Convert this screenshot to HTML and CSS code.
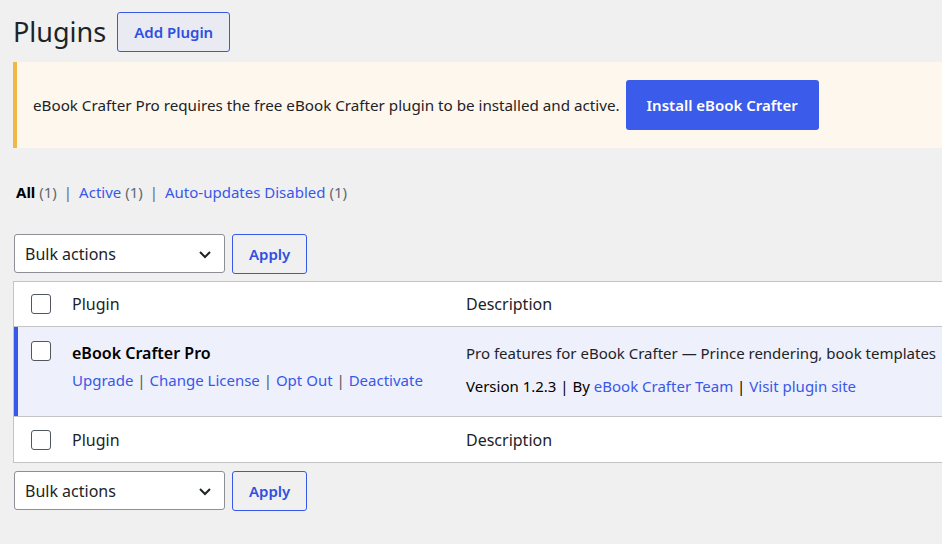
FILE: index.html
```html
<!doctype html>
<html lang="en">
<head>
  <meta charset="UTF-8">
  <title>Plugins</title>
  <link rel="stylesheet" href="styles.css">
</head>
<body>
  <div class="wrap">
    <div class="page-head">
      <h1>Plugins</h1>
      <a class="btn-outline" href="#">Add Plugin</a>
    </div>

    <div class="notice">
      <p>eBook Crafter Pro requires the free eBook Crafter plugin to be installed and active.</p>
      <a class="btn-primary" href="#">Install eBook Crafter</a>
    </div>

    <ul class="subsubsub">
      <li><b>All</b> <span class="count">(1)</span></li>
      <li class="sep">|</li>
      <li><a href="#">Active</a> <span class="count">(1)</span></li>
      <li class="sep">|</li>
      <li><a href="#">Auto-updates Disabled</a> <span class="count">(1)</span></li>
    </ul>

    <div class="tablenav top">
      <div class="select">Bulk actions
        <svg width="16" height="16" viewBox="0 0 16 16"><path d="M3 6l5 5 5-5" fill="none" stroke="#1d2327" stroke-width="2"/></svg>
      </div>
      <a class="btn-outline small" href="#">Apply</a>
    </div>

    <table class="plugins">
      <thead>
        <tr>
          <td class="cb"><span class="checkbox"></span></td>
          <th class="col-name">Plugin</th>
          <th class="col-desc">Description</th>
        </tr>
      </thead>
      <tbody>
        <tr class="active">
          <td class="cb"><span class="checkbox"></span></td>
          <td class="col-name">
            <strong>eBook Crafter Pro</strong>
            <div class="row-actions">
              <a href="#">Upgrade</a> | <a href="#">Change License</a> | <a href="#">Opt Out</a> | <a href="#">Deactivate</a>
            </div>
          </td>
          <td class="col-desc">
            <p class="desc">Pro features for eBook Crafter — Prince rendering, book templates</p>
            <p class="meta">Version 1.2.3 | By <a href="#">eBook Crafter Team</a> | <a href="#">Visit plugin site</a></p>
          </td>
        </tr>
      </tbody>
      <tfoot>
        <tr>
          <td class="cb"><span class="checkbox"></span></td>
          <th class="col-name">Plugin</th>
          <th class="col-desc">Description</th>
        </tr>
      </tfoot>
    </table>

    <div class="tablenav bottom">
      <div class="select">Bulk actions
        <svg width="16" height="16" viewBox="0 0 16 16"><path d="M3 6l5 5 5-5" fill="none" stroke="#1d2327" stroke-width="2"/></svg>
      </div>
      <a class="btn-outline small" href="#">Apply</a>
    </div>
  </div>
</body>
</html>
```

FILE: styles.css
```css
html, body{
  margin: 0;
  background: #f0f0f1;
  overflow: hidden;
}

body{
  font-family: "Noto Sans", "Open Sans", sans-serif;
  font-size: 15px;
  color: #1d2327;
}

a{
  color: #3858e9;
  text-decoration: none;
}

.wrap{
  padding: 12px 0 0 13px;
  width: 1200px;
}

.page-head{
  display: flex;
  align-items: center;
  gap: 11px;
}

h1{
  margin: 0;
  font-size: 27px;
  font-weight: 400;
  line-height: 40px;
}

.btn-outline{
  display: inline-flex;
  align-items: center;
  height: 38px;
  padding: 0 16px;
  border: 1px solid #3858e9;
  border-radius: 3px;
  background: #e9eaf2;
  color: #2f4fe0;
  font-weight: 600;
}

.btn-outline.small{
  background: #f0f0f1;
  padding: 0 16px;
}

.notice{
  display: flex;
  align-items: center;
  gap: 6px;
  margin-top: 10px;
  height: 86px;
  padding-left: 16px;
  border-left: 4px solid #f0b849;
  background: #fef7ee;
}

.notice p{
  margin: 0;
  font-size: 15.2px;
}

.btn-primary{
  display: inline-flex;
  align-items: center;
  height: 50px;
  padding: 0 21px;
  border-radius: 3px;
  background: #3b5bea;
  color: #fff;
  font-weight: 600;
}

.subsubsub{
  display: flex;
  gap: 7px;
  list-style: none;
  margin: 32px 0 0 3px;
  padding: 0;
  height: 24px;
  align-items: center;
}

.subsubsub b{
  color: #000;
}

.count, .sep{
  color: #646970;
}

.tablenav{
  display: flex;
  gap: 7px;
  margin-top: 30px;
  padding-left: 1px;
}

.tablenav.bottom{
  margin-top: 8px;
}

.select{
  display: flex;
  align-items: center;
  justify-content: space-between;
  width: 188px;
  height: 37px;
  padding: 0 11px 0 10px;
  border: 1px solid #8c8f94;
  border-radius: 3px;
  background: #fff;
  font-size: 16px;
}

.plugins{
  margin-top: 7px;
  width: 1180px;
  border-collapse: collapse;
  border: 1px solid #c3c4c7;
  background: #fff;
}

.plugins th, .plugins td{
  text-align: left;
  vertical-align: middle;
  font-weight: 400;
  padding: 0 10px;
}

.plugins thead tr{
  height: 45px;
}

.plugins tfoot tr{
  height: 46px;
}

.plugins thead th, .plugins thead td{
  border-bottom: 1px solid #c3c4c7;
  font-size: 16px;
}

.plugins tfoot th, .plugins tfoot td{
  border-top: 1px solid #c3c4c7;
  font-size: 16px;
}

.plugins .cb{
  width: 31px;
  padding: 0 0 0 17px;
}

.plugins .col-name{
  width: 374px;
}

.checkbox{
  display: block;
  width: 18px;
  height: 18px;
  border: 1px solid #50575e;
  border-radius: 3px;
  background: #fff;
}

.plugins tbody tr.active{
  height: 90px;
}

.plugins tbody tr.active td{
  background: #eef0fb;
  vertical-align: top;
}

.plugins tbody tr.active .cb{
  box-shadow: inset 4px 0 0 #3858e9;
  padding-top: 14px;
}

.plugins tbody .col-name{
  padding-top: 15px;
}

.plugins tbody strong{
  font-size: 16px;
  font-weight: 600;
  color: #000;
}

.row-actions{
  margin-top: 6px;
  color: #50575e;
}

.desc{
  margin: 16px 0 0;
  white-space: nowrap;
}

.meta{
  margin: 13px 0 0;
  color: #000;
}
```
